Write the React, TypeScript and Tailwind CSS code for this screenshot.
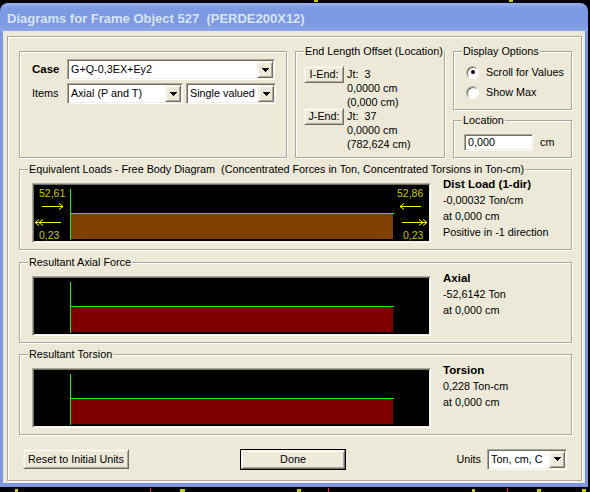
const SUNKEN =
  "border border-t-[#aca899] border-l-[#aca899] border-r-white border-b-white shadow-[inset_1px_1px_0_#716f64,inset_-1px_-1px_0_#f1efe2]";
const RAISED =
  "border border-t-[#f1efe2] border-l-[#f1efe2] border-r-[#716f64] border-b-[#716f64] shadow-[inset_1px_1px_0_#fff,inset_-1px_-1px_0_#aca899]";
const ETCHED = "border border-[#aca899] shadow-[inset_1px_1px_0_#fff,1px_1px_0_#fff]";

function DownArrow() {
  return (
    <svg width="7" height="4" viewBox="0 0 7 4" className="block">
      <path d="M0 0h7v1H0z M1 1h5v1H1z M2 2h3v1H2z M3 3h1v1H3z" fill="#000" />
    </svg>
  );
}

function Combo({ value, className }: { value: string; className: string }) {
  return (
    <div className={`flex bg-white ${SUNKEN} ${className}`}>
      <span className="flex flex-1 items-center overflow-hidden whitespace-nowrap pl-[3px]">{value}</span>
      <span className={`m-[1px] flex w-[16px] items-center justify-center bg-[#ece9d8] ${RAISED}`}>
        <DownArrow />
      </span>
    </div>
  );
}

function Group({
  title,
  className,
  children,
}: {
  title?: string;
  className: string;
  children?: React.ReactNode;
}) {
  return (
    <div className={`relative ${ETCHED} ${className}`}>
      {title && (
        <span className="absolute left-[8px] top-[-8px] whitespace-pre bg-[#ece9d8] px-[1px] leading-[14px]">
          {title}
        </span>
      )}
      {children}
    </div>
  );
}

function Radio({ checked, label }: { checked?: boolean; label: string }) {
  return (
    <div className="flex h-[14px] items-center">
      <span className="flex h-[13px] w-[13px] items-center justify-center rounded-full border border-t-[#aca899] border-l-[#aca899] border-r-white border-b-white bg-white shadow-[inset_1px_1px_0_#716f64]">
        {checked && <span className="h-[4px] w-[4px] rounded-full bg-black" />}
      </span>
      <span className="ml-[7px]">{label}</span>
    </div>
  );
}

function Diagram({ fill, loads }: { fill: string; loads?: boolean }) {
  const yellow = "#ffff00";
  const num = "#c8c800";
  return (
    <div className={`h-[60px] w-[399px] shrink-0 bg-black ${SUNKEN}`}>
      <svg width="395" height="56" viewBox="0 0 395 56" className="m-[1px] block">
        <rect x="37" y="29" width="322" height="25" fill={fill} />
        <rect x="36" y="28" width="324" height="1" fill="#00ff00" />
        <rect x="36" y="4" width="1" height="51" fill="#00ff00" />
        {loads && (
          <g fontFamily="Liberation Sans, Arial, sans-serif" fontSize="10.5" fill={num}>
            <text x="5" y="12">52,61</text>
            <text x="5" y="54">0,23</text>
            <text x="363" y="12">52,86</text>
            <text x="369" y="54">0,23</text>
            <g stroke={yellow} strokeWidth="1" fill="none">
              <path d="M8 21.5H29 M25 18.5L29 21.5L25 24.5" />
              <path d="M1 37.5H27 M5 34.5L1 37.5L5 40.5 M9 34.5L5 37.5L9 40.5" />
              <path d="M366 21.5H387 M370 18.5L366 21.5L370 24.5" />
              <path d="M368 37.5H393 M389 34.5L393 37.5L389 40.5 M385 34.5L389 37.5L385 40.5" />
            </g>
          </g>
        )}
      </svg>
    </div>
  );
}

function Info({ title, lines, pt }: { title: string; lines: string[]; pt: string }) {
  return (
    <div className={`ml-[12px] leading-[16px] ${pt}`}>
      <div className="text-[11.5px] font-bold">{title}</div>
      {lines.map((l) => (
        <div key={l}>{l}</div>
      ))}
    </div>
  );
}

export default function App() {
  return (
    <div className="relative h-[492px] w-[590px] overflow-hidden bg-black font-['Liberation_Sans',Arial,sans-serif] text-[10.8px] text-black">
      <svg width="590" height="492" className="pointer-events-none absolute left-0 top-0">
        <rect x="314" y="0" width="4" height="2" fill="#c8c800" />
        <rect x="509" y="0" width="4" height="2" fill="#c8c800" />
        <rect x="15" y="489" width="3" height="3" fill="#c8c800" />
        <rect x="150" y="488" width="1" height="4" fill="#ff2020" />
        <rect x="180" y="489" width="5" height="3" fill="#c8c800" />
        <rect x="297" y="489" width="4" height="3" fill="#c8c800" />
        <rect x="328" y="488" width="1" height="4" fill="#ff2020" />
        <rect x="472" y="489" width="3" height="3" fill="#c8c800" />
        <rect x="507" y="488" width="1" height="4" fill="#ff2020" />
        <rect x="537" y="489" width="4" height="3" fill="#c8c800" />
        <rect x="582" y="489" width="4" height="3" fill="#c8c800" />
      </svg>

      <div className="relative mt-[3px] flex h-[484px] w-[588px] flex-col rounded-t-[8px] bg-[linear-gradient(180deg,#9ab2ee_0px,#7d9ae2_5px,#7b98e0_20px,#8aa8ea_28px,#7b95df_29px)]">
        <div className="flex h-[28px] shrink-0 items-center pl-[7px] pt-[4px] text-[13px] font-bold whitespace-pre text-[#d8e4f8]">
          Diagrams for Frame Object 527  (PERDE200X12)
        </div>

        <div className="mx-[3px] mb-[4px] flex-1 bg-[#ece9d8] pb-[2px] pl-[4px] pr-[3px] pt-[5px]">
          <div className={`flex h-[445px] flex-col pl-[11px] pt-[14px] ${ETCHED}`}>
            {/* top row */}
            <div className="flex h-[107px] gap-[8px]">
              <Group className="h-[107px] w-[268px] pl-[12px] pt-[7px]">
                <div className="flex items-center">
                  <span className="w-[35px] text-[11.5px] font-bold">Case</span>
                  <Combo value="G+Q-0,3EX+Ey2" className="h-[21px] w-[208px]" />
                </div>
                <div className="mt-[3px] flex items-center">
                  <span className="w-[35px]">Items</span>
                  <Combo value="Axial (P and T)" className="h-[21px] w-[116px]" />
                  <Combo value="Single valued" className="ml-[3px] h-[21px] w-[90px]" />
                </div>
              </Group>

              <Group title="End Length Offset (Location)" className="h-[107px] w-[150px] pl-[8px] pt-[14px]">
                {[
                  ["I-End:", "Jt:  3", "0,0000 cm", "(0,000 cm)"],
                  ["J-End:", "Jt:  37", "0,0000 cm", "(782,624 cm)"],
                ].map(([b, ...ls]) => (
                  <div key={b} className="flex h-[42px]">
                    <button className={`flex h-[17px] w-[40px] items-center justify-center bg-[#ece9d8] ${RAISED}`}>
                      {b}
                    </button>
                    <div className="ml-[3px] mt-[1px] leading-[14px] whitespace-pre">
                      {ls.map((l) => (
                        <div key={l}>{l}</div>
                      ))}
                    </div>
                  </div>
                ))}
              </Group>

              <div className="flex w-[119px] flex-col">
                <Group title="Display Options" className="h-[59px] pl-[12px] pt-[13px]">
                  <Radio checked label="Scroll for Values" />
                  <div className="mt-[6px]">
                    <Radio label="Show Max" />
                  </div>
                </Group>
                <Group title="Location" className="mt-[10px] h-[38px] pl-[10px] pt-[13px]">
                  <div className="flex items-center">
                    <div className={`flex h-[17px] w-[69px] items-center bg-white pl-[3px] ${SUNKEN}`}>0,000</div>
                    <span className="ml-[7px]">cm</span>
                  </div>
                </Group>
              </div>
            </div>

            {/* equivalent loads */}
            <Group
              title="Equivalent Loads - Free Body Diagram  (Concentrated Forces in Ton, Concentrated Torsions in Ton-cm)"
              className="mt-[11px] flex h-[81px] w-[553px] pl-[12px] pt-[13px]"
            >
              <Diagram fill="#804000" loads />
              <div className="-mt-[13px]">
                <Info
                  pt="pt-[6px]"
                  title="Dist Load (1-dir)"
                  lines={["-0,00032 Ton/cm", "at 0,000 cm", "Positive in -1 direction"]}
                />
              </div>
            </Group>

            <Group title="Resultant Axial Force" className="mt-[12px] flex h-[81px] w-[553px] pl-[12px] pt-[13px]">
              <Diagram fill="#800000" />
              <div className="-mt-[13px]">
                <Info pt="pt-[7px]" title="Axial" lines={["-52,6142 Ton", "at 0,000 cm"]} />
              </div>
            </Group>

            <Group title="Resultant Torsion" className="mt-[11px] flex h-[81px] w-[553px] pl-[12px] pt-[13px]">
              <Diagram fill="#800000" />
              <div className="-mt-[13px]">
                <Info pt="pt-[7px]" title="Torsion" lines={["0,228 Ton-cm", "at 0,000 cm"]} />
              </div>
            </Group>

            {/* buttons */}
            <div className="mr-[14px] mt-[14px] flex h-[20px] items-center">
              <button className={`ml-[4px] flex h-[20px] w-[106px] items-center justify-center bg-[#ece9d8] ${RAISED}`}>
                Reset to Initial Units
              </button>
              <div className="ml-[111px] h-[21px] w-[106px] border border-black">
                <button className={`flex h-full w-full items-center justify-center bg-[#ece9d8] ${RAISED}`}>
                  Done
                </button>
              </div>
              <span className="ml-auto">Units</span>
              <Combo value="Ton, cm, C" className="ml-[6px] h-[21px] w-[80px]" />
            </div>
          </div>
        </div>
      </div>
    </div>
  );
}
